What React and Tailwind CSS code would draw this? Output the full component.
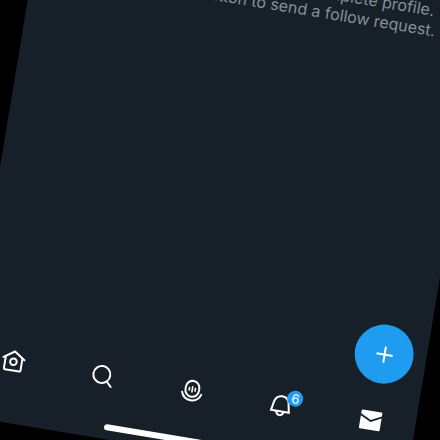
function Icon({ children }) {
  return (
    <svg
      viewBox="0 0 24 24"
      className="size-6 overflow-visible"
      fill="none"
      stroke="currentColor"
      strokeWidth="2"
      strokeLinecap="round"
      strokeLinejoin="round"
      aria-hidden="true"
    >
      {children}
    </svg>
  );
}

function HomeIcon() {
  return (
    <Icon>
      <path d="M1.4 9.4 12 2.2l10.6 7.2" />
      <path d="M3.6 8.4V20.1q0 1.2 1.2 1.2h14.4q1.2 0 1.2-1.2V8.4" />
      <circle cx="12" cy="12.6" r="3.3" />
    </Icon>
  );
}

function SearchIcon() {
  return (
    <Icon>
      <circle cx="10.3" cy="10.7" r="8.5" />
      <path d="M16.2 16.8 21 21.6" />
    </Icon>
  );
}

function SpacesIcon() {
  return (
    <Icon>
      <rect x="5.2" y="2.1" width="13.6" height="16" rx="6.8" />
      <path d="M2.3 14.6C3.8 19 7.5 21.6 12 21.6s8.2-2.6 9.7-7" />
      <path d="M9 9.2v2.6M12 7.9v5.2M15 9.2v2.6" strokeWidth="1.6" />
    </Icon>
  );
}

function BellIcon() {
  return (
    <Icon>
      <path
        d="M2.9 17.9 4.5 9.6C5.3 5.3 8.3 2.7 12 2.7s6.7 2.6 7.4 6.9l1.6 8.3Z"
        strokeLinejoin="miter"
      />
      <path d="M8.3 18.5c.5 2.1 1.9 3.3 3.7 3.3s3.2-1.2 3.7-3.3" />
    </Icon>
  );
}

function MailIcon() {
  return (
    <Icon>
      <path
        d="M2.7 2.5h18.6q1.2 0 1.2 1.2v2.8L12 11.6 1.5 6.5V3.7q0-1.2 1.2-1.2Z"
        fill="currentColor"
        stroke="none"
      />
      <path
        d="M1.5 8.5 12 13.6l10.5-5.1v11.9q0 1.2-1.2 1.2H2.7q-1.2 0-1.2-1.2Z"
        fill="currentColor"
        stroke="none"
      />
    </Icon>
  );
}

const tabs = [
  { name: "Home", Glyph: HomeIcon },
  { name: "Search", Glyph: SearchIcon },
  { name: "Spaces", Glyph: SpacesIcon },
  { name: "Notifications", Glyph: BellIcon, count: 6 },
  { name: "Messages", Glyph: MailIcon },
];

export default function App() {
  return (
    <main className="h-screen overflow-hidden bg-black font-['Inter','Liberation_Sans',sans-serif]">
      <div className="-mt-20 -ml-[41px] flex h-[calc(100vh+55px)] w-[calc(100%+12px)] origin-bottom-left rotate-[9.4deg] flex-col bg-[#172029] text-white">
        <p className="pt-2 pr-[45px] text-right text-base leading-5 text-[#84909b]">
          <span className="pr-1">complete profile.</span>
          <br />
          button to send a follow request.
        </p>

        <button
          type="button"
          aria-label="New message"
          className="mt-auto mr-[13px] mb-[26px] flex size-[59px] items-center justify-center self-end rounded-full bg-[#1f9bf0]"
        >
          <svg
            viewBox="0 0 18 18"
            className="size-[18px]"
            stroke="currentColor"
            strokeWidth="2"
            aria-hidden="true"
          >
            <path d="M9 .8v16.4M.8 9h16.4" />
          </svg>
        </button>

        <nav className="mb-[35px] grid grid-cols-5 justify-items-center">
          {tabs.map(({ name, Glyph, count }) => (
            <button key={name} type="button" aria-label={name} className="relative">
              <Glyph />
              {count && (
                <span className="absolute -top-[5px] -right-[9px] flex size-4 items-center justify-center rounded-full bg-[#1f9bf0] text-[13px] leading-4">
                  {count}
                </span>
              )}
            </button>
          ))}
        </nav>

        <div className="mb-[9px] h-1.5 w-[162px] self-center rounded-full bg-white" />
      </div>
    </main>
  );
}
